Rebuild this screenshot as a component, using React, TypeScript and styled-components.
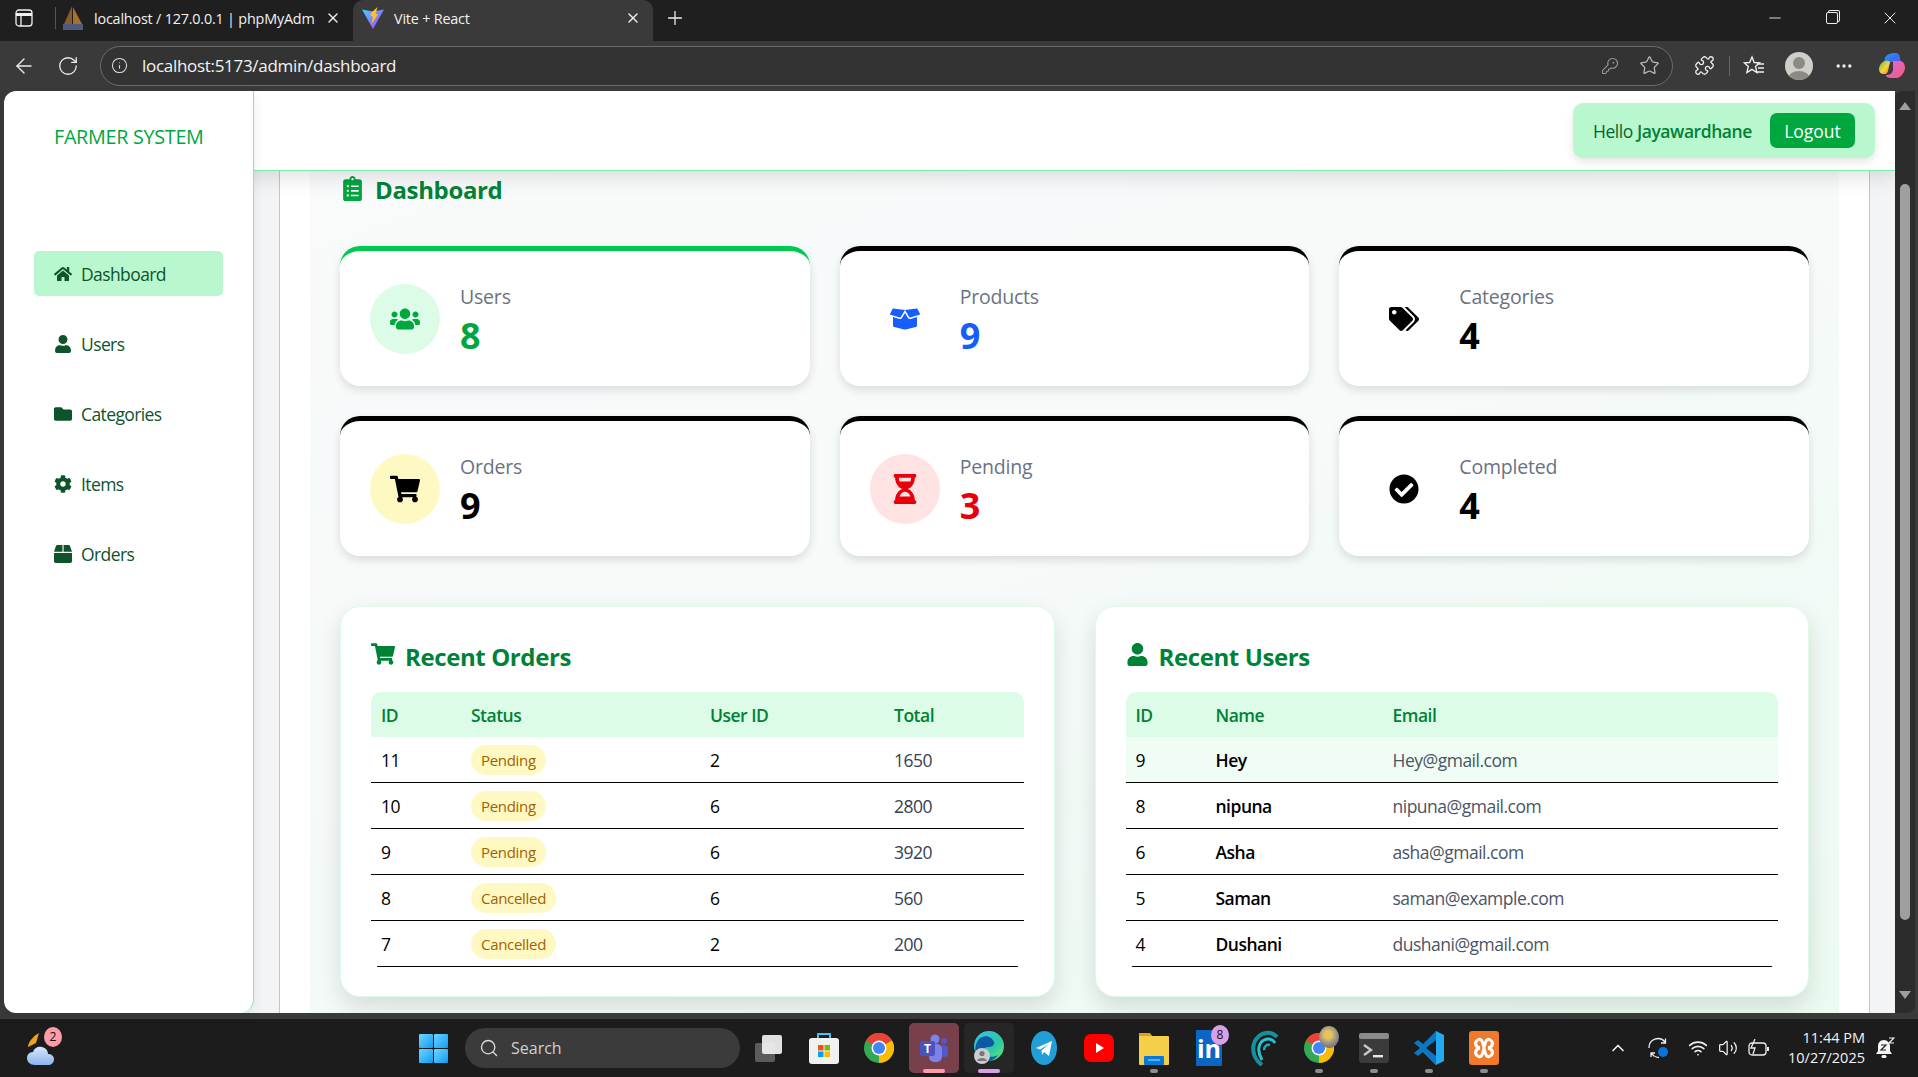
import styled, { createGlobalStyle } from "styled-components";
import type { ReactNode } from "react";
import {
  FaBox,
  FaBoxOpen,
  FaCheckCircle,
  FaClipboardList,
  FaCog,
  FaFolder,
  FaHome,
  FaHourglassHalf,
  FaShoppingCart,
  FaTags,
  FaUser,
  FaUsers,
} from "react-icons/fa";
import { ArrowLeft, ChevronUp, Info, KeyRound, Minus, MoreHorizontal, Plus, Puzzle, RotateCw, Search, Star, Volume2, Wifi, X } from "lucide-react";

const GlobalStyle = createGlobalStyle`
  * {
    box-sizing: border-box;
  }

  html,
  body {
    margin: 0;
    padding: 0;
    overflow: hidden;
    background: #3a3a3a;
    font-family: "Open Sans", "Noto Sans", sans-serif;
  }
`;

const Screen = styled.div`
  width: 1918px;
  height: 1077px;
  display: flex;
  flex-direction: column;
  overflow: hidden;
  background: #3a3a3a;
  color: #fff;
`;

/* browser chrome */
const TabStrip = styled.div`
  height: 41px;
  flex: none;
  display: flex;
  align-items: stretch;
  padding-left: 15px;
  background: #1f1f1f;
`;

const StripButton = styled.div`
  width: 40px;
  padding-bottom: 5px;
  display: flex;
  align-items: center;
`;

const TabDivider = styled.div`
  width: 1px;
  height: 22px;
  margin-top: 7px;
  background: #555;
`;

const Tab = styled.div<{ $active?: boolean }>`
  width: ${({ $active }) => ($active ? "300px" : "297px")};
  display: flex;
  align-items: center;
  gap: 10px;
  padding: 0 12px 5px ${({ $active }) => ($active ? "9px" : "6px")};
  border-radius: 10px 10px 0 0;
  background: ${({ $active }) => ($active ? "#3a3a3a" : "transparent")};
`;

const TabTitle = styled.span`
  flex: 1;
  white-space: nowrap;
  font-size: 14.4px;
  letter-spacing: -0.2px;
  color: #f1f1f1;
`;

const NewTab = styled.div`
  width: 44px;
  padding-bottom: 5px;
  display: flex;
  align-items: center;
  justify-content: center;
`;

const WindowControls = styled.div`
  margin-left: auto;
  display: flex;
  align-items: center;
  padding: 0 18px 5px 0;
  gap: 42px;
`;

const MaxIcon = styled.div`
  width: 12px;
  height: 12px;
  border: 1px solid #eee;
  border-radius: 2px;
  box-shadow: 2px -2px 0 -1px #1f1f1f, 2px -2px 0 0 #eee;
`;

const Toolbar = styled.div`
  height: 50px;
  flex: none;
  display: flex;
  align-items: center;
  padding: 0 0 1px 12px;
  background: #3a3a3a;
`;

const NavIcon = styled.div`
  width: 45px;
  flex: none;
  display: flex;
  align-items: center;
`;

const AddressBar = styled.div`
  width: 1573px;
  height: 40px;
  margin-left: -2px;
  flex: none;
  display: flex;
  align-items: center;
  padding: 0 12px 0 10px;
  border: 1px solid #6b6b6b;
  border-radius: 20px;
  background: #333;
`;

const Url = styled.span`
  flex: 1;
  margin-left: 14px;
  font-size: 17px;
  letter-spacing: -0.3px;
  color: #f4f4f4;
`;

const BarIcons = styled.div`
  display: flex;
  align-items: center;
  gap: 20px;
`;

const ToolIcons = styled.div`
  display: flex;
  align-items: center;
  flex: none;
  margin-left: 20px;
`;

const ToolSlot = styled.div<{ $w: number }>`
  width: ${({ $w }) => $w}px;
  display: flex;
  justify-content: center;
  align-items: center;
`;

const ToolDivider = styled.div`
  width: 1px;
  height: 20px;
  background: #666;
`;

/* page */
const Viewport = styled.div`
  height: 922px;
  flex: none;
  display: flex;
  padding: 0 3px 0 4px;
`;

const Sidebar = styled.aside`
  width: 250px;
  flex: none;
  position: relative;
  z-index: 3;
  padding: 31px 30px 0;
  background: #fff;
  border-right: 1px solid #7bf1a8;
  border-radius: 12px 0 14px 12px;
  box-shadow: 0 4px 12px rgba(0, 0, 0, 0.08);
`;

const Brand = styled.div`
  height: 30px;
  line-height: 30px;
  padding-left: 20px;
  margin-bottom: 99px;
  font-size: 19.8px;
  letter-spacing: -0.3px;
  white-space: nowrap;
  color: #00a63e;
`;

const NavList = styled.nav`
  display: flex;
  flex-direction: column;
  gap: 25px;
`;

const NavItem = styled.a<{ $active?: boolean }>`
  height: 45px;
  display: flex;
  align-items: center;
  gap: 9px;
  padding-left: 20px;
  border-radius: 5px;
  font-size: 17.5px;
  letter-spacing: -0.6px;
  color: #0d542b;
  background: ${({ $active }) => ($active ? "#b9f8cf" : "transparent")};

  svg {
    width: 18px;
    height: 18px;
    flex: none;
  }
`;

const Main = styled.main`
  flex: 1;
  min-width: 0;
  margin-left: -20px;
  display: flex;
  flex-direction: column;
  overflow: hidden;
  background: #f3f4f6;
`;

const Topbar = styled.header`
  height: 80px;
  flex: none;
  position: relative;
  z-index: 2;
  display: flex;
  justify-content: flex-end;
  align-items: flex-start;
  padding: 12px 20px 0 0;
  background: #fff;
  border-bottom: 1px solid #7bf1a8;
  box-shadow: 0 6px 20px rgba(0, 0, 0, 0.12);
`;

const Greeting = styled.div`
  width: 302px;
  height: 55px;
  display: flex;
  align-items: center;
  justify-content: space-between;
  padding: 0 20px;
  border-radius: 10px;
  background: #b9f8cf;
  box-shadow: 0 4px 8px rgba(0, 0, 0, 0.1);
  font-size: 17.5px;
  letter-spacing: -0.45px;
  color: #016630;

  b {
    font-weight: 600;
    color: #008236;
  }
`;

const LogoutButton = styled.button`
  width: 85px;
  height: 35px;
  padding: 0;
  border: 0;
  border-radius: 7px;
  background: #00a63e;
  color: #fff;
  font: inherit;
`;

const Scroller = styled.div`
  flex: 1;
  min-height: 0;
  overflow: hidden;
  padding: 0 25px 0 45px;
`;

const Frame = styled.div`
  height: 100%;
  padding: 0 30px;
  background: #fff;
  border-left: 1px solid #7bf1a8;
  border-right: 1px solid #7bf1a8;
`;

const Panel = styled.div`
  height: 100%;
  padding: 0 30px;
  background: linear-gradient(160deg, #f9fafb 0%, #f6faf9 45%, #ecfbf2 100%);
`;

const PageTitle = styled.h1`
  height: 36px;
  margin: 0 0 39px;
  padding-left: 3px;
  display: flex;
  align-items: center;
  gap: 13px;
  font-size: 24px;
  font-weight: 700;
  letter-spacing: -0.35px;
  color: #008236;

  svg {
    width: 19px;
    height: 25px;
    color: #00a63e;
    margin-bottom: 2px;
  }
`;

const StatGrid = styled.section`
  display: grid;
  grid-template-columns: repeat(3, 1fr);
  gap: 30px;
  margin-bottom: 50px;
`;

const StatCard = styled.article<{ $edge: string }>`
  height: 140px;
  display: flex;
  align-items: center;
  gap: 20px;
  padding: 0 30px;
  background: #fff;
  border-top: 5px solid ${({ $edge }) => $edge};
  border-radius: 20px;
  box-shadow: 0 4px 10px rgba(0, 0, 0, 0.12);
`;

const StatIcon = styled.div<{ $bg: string; $fg: string }>`
  width: 70px;
  height: 70px;
  flex: none;
  display: flex;
  align-items: center;
  justify-content: center;
  border-radius: 50%;
  background: ${({ $bg }) => $bg};
  color: ${({ $fg }) => $fg};
  font-size: 30px;
  margin-top: 1px;
`;

const StatText = styled.div`
  padding-top: 5px;
`;

const StatLabel = styled.div`
  font-size: 19.5px;
  line-height: 26px;
  font-weight: 500;
  letter-spacing: -0.2px;
  color: #6a7282;
`;

const StatValue = styled.div<{ $fg: string }>`
  font-size: 36px;
  line-height: 44px;
  margin-top: 4px;
  font-weight: 700;
  color: ${({ $fg }) => $fg};
`;

const TableGrid = styled.section`
  display: grid;
  grid-template-columns: 1fr 1fr;
  gap: 40px;
`;

const TableCard = styled.article`
  height: 391px;
  padding: 31px 30px 0;
  background: #fff;
  border: 1px solid #dcfce7;
  border-radius: 20px;
  box-shadow: 0 10px 25px rgba(0, 0, 0, 0.12);
`;

const TableTitle = styled.h2`
  height: 36px;
  margin: 0 0 18px;
  display: flex;
  align-items: center;
  gap: 10px;
  font-size: 24px;
  font-weight: 700;
  letter-spacing: -0.4px;
  color: #008236;

  svg {
    flex: none;
    margin-bottom: 4px;
  }
`;

const HeadRow = styled.div<{ $cols: string }>`
  height: 45px;
  display: grid;
  grid-template-columns: ${({ $cols }) => $cols};
  align-items: center;
  border-radius: 10px 10px 0 0;
  background: #dcfce7;
  font-size: 17.5px;
  font-weight: 600;
  letter-spacing: -0.5px;
  color: #008236;
`;

const BodyRow = styled.div<{ $cols: string; $last?: boolean; $tint?: boolean }>`
  height: ${({ $last }) => ($last ? "45px" : "46px")};
  display: grid;
  grid-template-columns: ${({ $cols }) => $cols};
  align-items: center;
  border-bottom: ${({ $last }) => ($last ? "0" : "1px solid #000")};
  background: ${({ $tint }) => ($tint ? "#f0fdf4" : "transparent")};
  font-size: 17.5px;
  letter-spacing: -0.5px;
  color: #000;
`;

const Cell = styled.div<{ $tone?: string; $strong?: boolean }>`
  padding-left: 10px;
  white-space: nowrap;
  color: ${({ $tone }) => $tone || "inherit"};
  font-weight: ${({ $strong }) => ($strong ? 600 : "inherit")};
`;

const StatusPill = styled.span`
  display: inline-block;
  height: 30px;
  line-height: 30px;
  padding: 0 10px;
  border-radius: 15px;
  background: #fef9c2;
  color: #a65f00;
  font-size: 15px;
  letter-spacing: -0.3px;
`;

const TableEnd = styled.div`
  height: 1px;
  margin: 0 6px;
  background: #000;
  border-radius: 1px;
`;

const Scrollbar = styled.div`
  width: 20px;
  flex: none;
  display: flex;
  flex-direction: column;
  align-items: center;
  padding-top: 11px;
  background: #2c2c2c;
  border-radius: 8px 0 8px 0;
`;

const ScrollArrow = styled.div<{ $down?: boolean }>`
  width: 0;
  height: 0;
  border-left: 6px solid transparent;
  border-right: 6px solid transparent;
  ${({ $down }) => ($down ? "border-top: 8px solid #9f9f9f;" : "border-bottom: 8px solid #9f9f9f;")}
`;

const ScrollThumb = styled.div`
  width: 10px;
  height: 736px;
  margin: 74px 0 71px;
  border-radius: 5px;
  background: #9f9f9f;
`;

/* taskbar */
const Taskbar = styled.footer`
  height: 58px;
  margin-top: 6px;
  flex: none;
  display: flex;
  align-items: center;
  background: #1c1c1c;
`;

const Weather = styled.div`
  width: 406px;
  flex: none;
  padding-left: 26px;
  display: flex;
  align-items: center;
`;

const Slot = styled.div<{ $bg?: string }>`
  width: ${({ $bg }) => ($bg ? "50px" : "55px")};
  height: 50px;
  margin: ${({ $bg }) => ($bg ? "0 2.5px" : "0")};
  flex: none;
  position: relative;
  display: flex;
  align-items: center;
  justify-content: center;
  border-radius: 5px;
  background: ${({ $bg }) => $bg || "transparent"};
`;

const SlotMark = styled.span<{ $color?: string }>`
  position: absolute;
  left: 50%;
  bottom: 0;
  transform: translateX(-50%);
  width: ${({ $color }) => ($color ? "22px" : "8px")};
  height: 4px;
  border-radius: 2px;
  background: ${({ $color }) => $color || "#8c8c8c"};
`;

const Badge = styled.span<{ $bg: string }>`
  position: absolute;
  top: 2px;
  right: 7px;
  width: 18px;
  height: 20px;
  border-radius: 50%;
  background: ${({ $bg }) => $bg};
  color: #111;
  font-size: 12px;
  line-height: 20px;
  text-align: center;
`;

const ProfileDot = styled.span`
  position: absolute;
  top: 3px;
  right: 7px;
  width: 20px;
  height: 22px;
  border-radius: 50%;
  background: radial-gradient(circle at 45% 40%, #e8c25a 0 22%, #8d8d8d 55%, #5d5d5d 100%);
`;

const WeatherBox = styled.div`
  position: relative;
  width: 36px;
  height: 38px;

  ${Badge} {
    top: -2px;
    right: 0;
  }
`;

const SearchBox = styled.div`
  width: 275px;
  height: 40px;
  margin: 0 1px 0 4px;
  flex: none;
  display: flex;
  align-items: center;
  gap: 12px;
  padding-left: 14px;
  border-radius: 20px;
  background: #3b3b3b;
  font-size: 16px;
  color: #cfcfcf;
`;

const Tray = styled.div`
  margin-left: auto;
  display: flex;
  align-items: center;
  padding-right: 13px;
`;

const TraySlot = styled.div<{ $w: number }>`
  width: ${({ $w }) => $w}px;
  display: flex;
  justify-content: center;
`;

const Clock = styled.div`
  width: 90px;
  text-align: right;
  font-size: 14.5px;
  line-height: 20px;
  color: #f2f2f2;
  white-space: nowrap;
`;

/* drawn logos */
const PmaLogo = () => (
  <svg width="22" height="26" viewBox="0 0 22 26">
    <path d="M10 1 2 19h8z" fill="#8a5a2b" />
    <path d="M11 2l9 17h-9z" fill="#a8702e" />
    <rect x="1" y="19" width="20" height="6" fill="#4f5b7a" />
  </svg>
);

const ViteLogo = () => (
  <svg width="22" height="24" viewBox="0 0 22 24">
    <defs>
      <linearGradient id="viteA" x1="0" y1="0" x2="1" y2="1">
        <stop offset="0" stopColor="#41d1ff" />
        <stop offset="1" stopColor="#bd34fe" />
      </linearGradient>
    </defs>
    <path d="M0 3.5 11 5.5 22 3.5 11 23z" fill="url(#viteA)" />
    <path d="M9 7 15.5 1 13.5 8 16 8.5 9.5 18 11 10.5 8.5 10z" fill="#ffc517" />
  </svg>
);

const CopilotLogo = () => (
  <svg width="28" height="28" viewBox="0 0 28 28">
    <defs>
      <linearGradient id="copA" x1="0" y1="0" x2="1" y2="1">
        <stop offset="0" stopColor="#1aa4f5" />
        <stop offset="0.5" stopColor="#3b6ef0" />
        <stop offset="1" stopColor="#7c4be0" />
      </linearGradient>
      <linearGradient id="copB" x1="0" y1="0" x2="1" y2="1">
        <stop offset="0" stopColor="#45c75a" />
        <stop offset="0.55" stopColor="#ffd23c" />
        <stop offset="1" stopColor="#f4703c" />
      </linearGradient>
      <linearGradient id="copC" x1="0" y1="0" x2="1" y2="1">
        <stop offset="0" stopColor="#d86be8" />
        <stop offset="1" stopColor="#f4587a" />
      </linearGradient>
    </defs>
    <path d="M7 6C9 1 15 1 18 1c2 0 4 2 4 5l1 4H13l-3 3-5 1z" fill="url(#copA)" />
    <path d="M5 10c3-2 6-1 7 0l-2 9c-1 3-2 3-4 3-3 0-5-2-5-5 0-3 2-6 4-7z" fill="url(#copB)" />
    <path d="M15 9h7c3 0 5 3 5 7 0 3-3 9-8 10h-6c-3 0-5-1-5-3 4 0 6-1 7-5z" fill="url(#copC)" />
  </svg>
);

const ChromeLogo = () => (
  <svg width="30" height="30" viewBox="0 0 30 30">
    <circle cx="15" cy="15" r="15" fill="#34a853" />
    <path d="M15 15 2 7.5A15 15 0 0 1 28 7.5z" fill="#ea4335" />
    <path d="M15 15 28 7.5A15 15 0 0 1 15 30z" fill="#fbbc04" />
    <circle cx="15" cy="15" r="7.5" fill="#fff" />
    <circle cx="15" cy="15" r="6" fill="#4285f4" />
  </svg>
);

const StartLogo = () => (
  <svg width="29" height="29" viewBox="0 0 29 29">
    <defs>
      <linearGradient id="winA" x1="0" y1="0" x2="1" y2="1">
        <stop offset="0" stopColor="#6fd6ff" />
        <stop offset="1" stopColor="#0f9bf2" />
      </linearGradient>
    </defs>
    <rect width="14" height="14" rx="1" fill="url(#winA)" />
    <rect x="15" width="14" height="14" rx="1" fill="url(#winA)" />
    <rect y="15" width="14" height="14" rx="1" fill="url(#winA)" />
    <rect x="15" y="15" width="14" height="14" rx="1" fill="url(#winA)" />
  </svg>
);

const TaskView = () => (
  <svg width="28" height="28" viewBox="0 0 28 28">
    <rect x="0" y="9" width="20" height="19" rx="2" fill="#5c5c5c" />
    <rect x="7" y="1" width="20" height="19" rx="2" fill="#f2f2f2" fillOpacity="0.92" />
  </svg>
);

const StoreLogo = () => (
  <svg width="30" height="32" viewBox="0 0 30 32">
    <path d="M9 6V2h12v4" fill="none" stroke="#3cc4f0" strokeWidth="2" />
    <rect x="0" y="6" width="30" height="26" rx="3" fill="#f1f1f1" />
    <rect x="9" y="13" width="5.5" height="5.5" fill="#f25022" />
    <rect x="15.5" y="13" width="5.5" height="5.5" fill="#7fba00" />
    <rect x="9" y="19.5" width="5.5" height="5.5" fill="#00a4ef" />
    <rect x="15.5" y="19.5" width="5.5" height="5.5" fill="#ffb900" />
  </svg>
);

const TeamsLogo = () => (
  <svg width="30" height="30" viewBox="0 0 30 30">
    <circle cx="16" cy="6" r="4.5" fill="#7b83eb" />
    <circle cx="25" cy="8" r="3" fill="#5059c9" />
    <rect x="21" y="12" width="8" height="12" rx="4" fill="#5059c9" />
    <rect x="10" y="11" width="13" height="18" rx="5" fill="#7b83eb" />
    <rect x="1" y="8" width="15" height="15" rx="2" fill="#4b53bc" />
    <text x="8.5" y="20" textAnchor="middle" fontSize="12" fontWeight="700" fill="#fff" fontFamily="Open Sans, sans-serif">
      T
    </text>
  </svg>
);

const EdgeLogo = () => (
  <svg width="30" height="34" viewBox="0 0 30 34">
    <defs>
      <linearGradient id="edgeA" x1="0" y1="0" x2="1" y2="1">
        <stop offset="0" stopColor="#35c1f1" />
        <stop offset="0.6" stopColor="#2fc7a4" />
        <stop offset="1" stopColor="#66eb6e" />
      </linearGradient>
    </defs>
    <circle cx="15" cy="15" r="15" fill="url(#edgeA)" />
    <path d="M5 8c5-5 13-3 15 3 1 3-2 5-6 5-4 0-5 3-3 7 2 3 8 4 13 1-4 6-12 8-18 5-6-5-6-15-1-21z" fill="#0c59a4" />
    <circle cx="8" cy="25" r="8" fill="#ccc" />
    <circle cx="8" cy="22.5" r="2.6" fill="#777" />
    <path d="M3 30c1-4 9-4 10 0z" fill="#777" />
  </svg>
);

const TelegramLogo = () => (
  <svg width="26" height="34" viewBox="0 0 26 34">
    <ellipse cx="13" cy="17" rx="13" ry="17" fill="#229ed9" />
    <path d="M5 17 21 10 18 25 13 21 11 24 10.5 19.5 18 13 9 18.5z" fill="#fff" />
  </svg>
);

const YoutubeLogo = () => (
  <svg width="30" height="28" viewBox="0 0 30 28">
    <rect width="30" height="28" rx="7" fill="#f00" />
    <path d="M12 9l8 5-8 5z" fill="#fff" />
  </svg>
);

const FolderLogo = () => (
  <svg width="30" height="34" viewBox="0 0 30 34">
    <path d="M0 2h11l3 4h16v6H0z" fill="#d9a514" />
    <rect y="5" width="30" height="29" rx="1" fill="#f6cf4a" />
    <rect x="5" y="25" width="20" height="9" rx="1" fill="#0a78d4" />
    <rect x="9" y="28" width="12" height="2" fill="#4cb3f0" />
  </svg>
);

const LinkedinLogo = () => (
  <svg width="26" height="36" viewBox="0 0 26 36">
    <rect width="26" height="36" rx="1" fill="#0a66c2" />
    <text x="13" y="28" textAnchor="middle" fontSize="25" fontWeight="700" fill="#fff" fontFamily="Open Sans, sans-serif">
      in
    </text>
  </svg>
);

const WaveLogo = () => (
  <svg width="30" height="36" viewBox="0 0 30 36">
    <path d="M13 35C3 28 1 14 10 6c5-4 13-5 18 1" fill="none" stroke="#1590a0" strokeWidth="4" />
    <path d="M13 30C8 22 9 13 15 10c4-2 9-1 11 3" fill="none" stroke="#25c2cf" strokeWidth="3" />
    <path d="M15 20c0-4 3-6 6-5" fill="none" stroke="#23a9b8" strokeWidth="2.5" />
  </svg>
);

const TerminalLogo = () => (
  <svg width="30" height="30" viewBox="0 0 30 30">
    <rect width="30" height="30" rx="3" fill="#3b3b3b" />
    <rect width="30" height="6" rx="2" fill="#8b8b8b" />
    <path d="M5 12l7 5-7 5" fill="none" stroke="#c8c8c8" strokeWidth="2.4" />
    <rect x="14" y="22" width="10" height="2.4" fill="#e8e8e8" />
  </svg>
);

const VscodeLogo = () => (
  <svg width="30" height="34" viewBox="0 0 30 34">
    <path d="M22 0 30 4v26l-8 4L7 19l8-2z" fill="#24a8ee" />
    <path d="M22 0v34L9 21l-5 4-4-3 6-5-6-5 4-3 5 4z" fill="#0b78c4" />
    <path d="M22 9 12 17l10 8z" fill="#1c1c1c" />
  </svg>
);

const XamppLogo = () => (
  <svg width="30" height="34" viewBox="0 0 30 34">
    <rect width="30" height="34" rx="3" fill="#ef7a2a" />
    <path d="M9 9c4-3 5 4 6 8s2 11 6 8M21 9c-4-3-5 4-6 8s-2 11-6 8" fill="none" stroke="#fff" strokeWidth="3" />
    <path d="M9 9c-4 2-3 7 2 8M21 9c4 2 3 7-2 8" fill="none" stroke="#fff" strokeWidth="3" />
    <path d="M9 25c-4-2-3-7 2-8M21 25c4-2 3-7-2-8" fill="none" stroke="#fff" strokeWidth="3" />
  </svg>
);

const WeatherIcon = () => (
  <svg width="32" height="36" viewBox="0 0 32 36">
    <defs>
      <linearGradient id="cloudA" x1="0" y1="0" x2="0" y2="1">
        <stop offset="0" stopColor="#d8e6fb" />
        <stop offset="1" stopColor="#8cb4ee" />
      </linearGradient>
    </defs>
    <path d="M13 4C6 8 2 14 2 18l8-4z" fill="#f2a21c" />
    <path d="M9 36c-5 0-8-3-8-7 0-3 2-6 6-6 1-4 5-6 9-5 4 1 6 4 6 7 3 0 6 2 6 5 0 4-3 6-6 6z" fill="url(#cloudA)" />
  </svg>
);

const Avatar = () => (
  <svg width="28" height="28" viewBox="0 0 28 28">
    <defs>
      <clipPath id="avatarClip">
        <circle cx="14" cy="14" r="14" />
      </clipPath>
    </defs>
    <circle cx="14" cy="14" r="14" fill="#cfcfca" />
    <g clipPath="url(#avatarClip)" fill="#8c8a85">
      <circle cx="14" cy="11" r="6" />
      <ellipse cx="14" cy="27" rx="11" ry="8" />
    </g>
  </svg>
);

const FavStar = () => (
  <svg width="22" height="22" viewBox="0 0 22 22" fill="none" stroke="#eee" strokeWidth="1.4">
    <path d="M9 2l2.2 5.5 5.3.3-4 3.8 1.4 6-5-3.2-5 3.2 1.4-6-4-3.8 5.3-.3z" />
    <path d="M14 9h7M15 13h6M14 17h7" />
  </svg>
);

const SyncIcon = () => (
  <svg width="22" height="22" viewBox="0 0 22 22" fill="none" stroke="#eee" strokeWidth="1.3">
    <path d="M2 11A9 9 0 0 1 18 5M14 6h4.5V1.5" />
    <path d="M4 16l3.5 3.5M4 20v-4h4M8 19.5c1.5.8 3 1 4 1" />
    <circle cx="16" cy="15" r="5" fill="#0a74da" stroke="none" />
  </svg>
);

const BatteryIcon = () => (
  <svg width="22" height="18" viewBox="0 0 22 18" fill="none" stroke="#eee" strokeWidth="1.3">
    <rect x="1" y="4" width="17" height="12" rx="3" />
    <path d="M20 8v4" strokeWidth="2" />
    <path d="M7 0 3 9h4l-2 6" />
  </svg>
);

const BellIcon = () => (
  <svg width="20" height="22" viewBox="0 0 20 22">
    <path d="M9 3c-4 0-6 3-6 6v5l-2 3h16l-2-3V9c0-3-3-6-6-6z" fill="#f4f4f4" />
    <rect x="6.5" y="18" width="5" height="3" rx="1.5" fill="#f4f4f4" />
    <path d="M6 8h5l-5 5h5" fill="none" stroke="#1c1c1c" strokeWidth="1.2" />
    <path d="M14 1h5l-5 5h5" fill="none" stroke="#f4f4f4" strokeWidth="1.2" />
  </svg>
);

const PanelIcon = () => (
  <svg width="18" height="18" viewBox="0 0 18 18" fill="none" stroke="#f1f1f1" strokeWidth="1.3">
    <rect x="1" y="1" width="16" height="16" rx="3" />
    <path d="M1 5.5h16" strokeWidth="3" />
    <path d="M6 6v11" />
  </svg>
);

type Stat = { label: string; value: number; icon: ReactNode; edge: string; bg: string; fg: string; valueColor: string };

const stats: Stat[] = [
  { label: "Users", value: 8, icon: <FaUsers />, edge: "#00c950", bg: "#dcfce7", fg: "#00a63e", valueColor: "#00a63e" },
  { label: "Products", value: 9, icon: <FaBoxOpen />, edge: "#000", bg: "transparent", fg: "#155dfc", valueColor: "#155dfc" },
  { label: "Categories", value: 4, icon: <FaTags />, edge: "#000", bg: "transparent", fg: "#000", valueColor: "#000" },
  { label: "Orders", value: 9, icon: <FaShoppingCart />, edge: "#000", bg: "#fef9c2", fg: "#000", valueColor: "#000" },
  { label: "Pending", value: 3, icon: <FaHourglassHalf />, edge: "#000", bg: "#ffe2e2", fg: "#e7000b", valueColor: "#e7000b" },
  { label: "Completed", value: 4, icon: <FaCheckCircle />, edge: "#000", bg: "transparent", fg: "#000", valueColor: "#000" },
];

const navItems = [
  { label: "Dashboard", icon: <FaHome />, active: true },
  { label: "Users", icon: <FaUser /> },
  { label: "Categories", icon: <FaFolder /> },
  { label: "Items", icon: <FaCog /> },
  { label: "Orders", icon: <FaBox /> },
];

const orders = [
  { id: 11, status: "Pending", user: 2, total: 1650 },
  { id: 10, status: "Pending", user: 6, total: 2800 },
  { id: 9, status: "Pending", user: 6, total: 3920 },
  { id: 8, status: "Cancelled", user: 6, total: 560 },
  { id: 7, status: "Cancelled", user: 2, total: 200 },
];

const users = [
  { id: 9, name: "Hey", email: "Hey@gmail.com" },
  { id: 8, name: "nipuna", email: "nipuna@gmail.com" },
  { id: 6, name: "Asha", email: "asha@gmail.com" },
  { id: 5, name: "Saman", email: "saman@example.com" },
  { id: 4, name: "Dushani", email: "dushani@gmail.com" },
];

const orderCols = "90px 239px 184px 1fr";
const userCols = "80px 177px 1fr";

const BrowserChrome = () => (
  <>
    <TabStrip>
      <StripButton>
        <PanelIcon />
      </StripButton>
      <TabDivider />
      <Tab>
        <PmaLogo />
        <TabTitle>localhost / 127.0.0.1 | phpMyAdm</TabTitle>
        <X size={16} color="#eee" />
      </Tab>
      <Tab $active>
        <ViteLogo />
        <TabTitle>Vite + React</TabTitle>
        <X size={16} color="#eee" />
      </Tab>
      <NewTab>
        <Plus size={22} color="#eee" strokeWidth={1.4} />
      </NewTab>
      <WindowControls>
        <Minus size={18} color="#eee" strokeWidth={1.2} />
        <MaxIcon />
        <X size={20} color="#eee" strokeWidth={1.2} />
      </WindowControls>
    </TabStrip>
    <Toolbar>
      <NavIcon>
        <ArrowLeft size={24} color="#eee" strokeWidth={1.4} />
      </NavIcon>
      <NavIcon>
        <RotateCw size={22} color="#eee" strokeWidth={1.4} />
      </NavIcon>
      <AddressBar>
        <Info size={17} color="#ddd" strokeWidth={1.5} />
        <Url>localhost:5173/admin/dashboard</Url>
        <BarIcons>
          <KeyRound size={18} color="#999" strokeWidth={1.4} />
          <Star size={21} color="#bbb" strokeWidth={1.4} />
        </BarIcons>
      </AddressBar>
      <ToolIcons>
        <ToolSlot $w={22}>
          <Puzzle size={21} color="#eee" strokeWidth={1.5} />
        </ToolSlot>
        <ToolSlot $w={28}>
          <ToolDivider />
        </ToolSlot>
        <ToolSlot $w={22}>
          <FavStar />
        </ToolSlot>
        <ToolSlot $w={68}>
          <Avatar />
        </ToolSlot>
        <ToolSlot $w={22}>
          <MoreHorizontal size={20} color="#eee" />
        </ToolSlot>
        <ToolSlot $w={74}>
          <CopilotLogo />
        </ToolSlot>
      </ToolIcons>
    </Toolbar>
  </>
);

const WindowsTaskbar = () => (
  <Taskbar>
    <Weather>
      <WeatherBox>
        <WeatherIcon />
        <Badge $bg="#ff9aa8">2</Badge>
      </WeatherBox>
    </Weather>
    <Slot>
      <StartLogo />
    </Slot>
    <SearchBox>
      <Search size={20} color="#ddd" strokeWidth={1.6} />
      Search
    </SearchBox>
    <Slot>
      <TaskView />
    </Slot>
    <Slot>
      <StoreLogo />
    </Slot>
    <Slot>
      <ChromeLogo />
    </Slot>
    <Slot $bg="#77404a">
      <TeamsLogo />
      <SlotMark $color="#ff9aa8" />
    </Slot>
    <Slot $bg="#262626">
      <EdgeLogo />
      <SlotMark $color="#d8a0e8" />
    </Slot>
    <Slot>
      <TelegramLogo />
    </Slot>
    <Slot>
      <YoutubeLogo />
    </Slot>
    <Slot>
      <FolderLogo />
      <SlotMark />
    </Slot>
    <Slot>
      <LinkedinLogo />
      <Badge $bg="#d8a0e8">8</Badge>
    </Slot>
    <Slot>
      <WaveLogo />
    </Slot>
    <Slot>
      <ChromeLogo />
      <ProfileDot />
      <SlotMark />
    </Slot>
    <Slot>
      <TerminalLogo />
      <SlotMark />
    </Slot>
    <Slot>
      <VscodeLogo />
      <SlotMark />
    </Slot>
    <Slot>
      <XamppLogo />
      <SlotMark />
    </Slot>
    <Tray>
      <TraySlot $w={30}>
        <ChevronUp size={20} color="#eee" />
      </TraySlot>
      <TraySlot $w={50}>
        <SyncIcon />
      </TraySlot>
      <TraySlot $w={30}>
        <Wifi size={20} color="#eee" />
      </TraySlot>
      <TraySlot $w={30}>
        <Volume2 size={20} color="#eee" strokeWidth={1.5} />
      </TraySlot>
      <TraySlot $w={32}>
        <BatteryIcon />
      </TraySlot>
      <Clock>
        11:44 PM
        <br />
        10/27/2025
      </Clock>
      <TraySlot $w={40}>
        <BellIcon />
      </TraySlot>
    </Tray>
  </Taskbar>
);

export default function App() {
  return (
    <Screen>
      <GlobalStyle />
      <BrowserChrome />
      <Viewport>
        <Sidebar>
          <Brand>FARMER SYSTEM</Brand>
          <NavList>
            {navItems.map((item) => (
              <NavItem key={item.label} $active={item.active}>
                {item.icon}
                {item.label}
              </NavItem>
            ))}
          </NavList>
        </Sidebar>
        <Main>
          <Topbar>
            <Greeting>
              <span>
                Hello <b>Jayawardhane</b>
              </span>
              <LogoutButton>Logout</LogoutButton>
            </Greeting>
          </Topbar>
          <Scroller>
            <Frame>
              <Panel>
                <PageTitle>
                  <FaClipboardList />
                  Dashboard
                </PageTitle>
                <StatGrid>
                  {stats.map((stat) => (
                    <StatCard key={stat.label} $edge={stat.edge}>
                      <StatIcon $bg={stat.bg} $fg={stat.fg}>
                        {stat.icon}
                      </StatIcon>
                      <StatText>
                        <StatLabel>{stat.label}</StatLabel>
                        <StatValue $fg={stat.valueColor}>{stat.value}</StatValue>
                      </StatText>
                    </StatCard>
                  ))}
                </StatGrid>
                <TableGrid>
                  <TableCard>
                    <TableTitle>
                      <FaShoppingCart size={24} />
                      Recent Orders
                    </TableTitle>
                    <HeadRow $cols={orderCols}>
                      <Cell>ID</Cell>
                      <Cell>Status</Cell>
                      <Cell>User ID</Cell>
                      <Cell>Total</Cell>
                    </HeadRow>
                    {orders.map((order, index) => (
                      <BodyRow key={order.id} $cols={orderCols} $last={index === orders.length - 1}>
                        <Cell>{order.id}</Cell>
                        <Cell>
                          <StatusPill>{order.status}</StatusPill>
                        </Cell>
                        <Cell>{order.user}</Cell>
                        <Cell $tone="#364153">{order.total}</Cell>
                      </BodyRow>
                    ))}
                    <TableEnd />
                  </TableCard>
                  <TableCard>
                    <TableTitle>
                      <FaUser size={23} />
                      Recent Users
                    </TableTitle>
                    <HeadRow $cols={userCols}>
                      <Cell>ID</Cell>
                      <Cell>Name</Cell>
                      <Cell>Email</Cell>
                    </HeadRow>
                    {users.map((user, index) => (
                      <BodyRow key={user.id} $cols={userCols} $tint={index === 0} $last={index === users.length - 1}>
                        <Cell>{user.id}</Cell>
                        <Cell $strong>{user.name}</Cell>
                        <Cell $tone="#4a5565">{user.email}</Cell>
                      </BodyRow>
                    ))}
                    <TableEnd />
                  </TableCard>
                </TableGrid>
              </Panel>
            </Frame>
          </Scroller>
        </Main>
        <Scrollbar>
          <ScrollArrow />
          <ScrollThumb />
          <ScrollArrow $down />
        </Scrollbar>
      </Viewport>
      <WindowsTaskbar />
    </Screen>
  );
}
